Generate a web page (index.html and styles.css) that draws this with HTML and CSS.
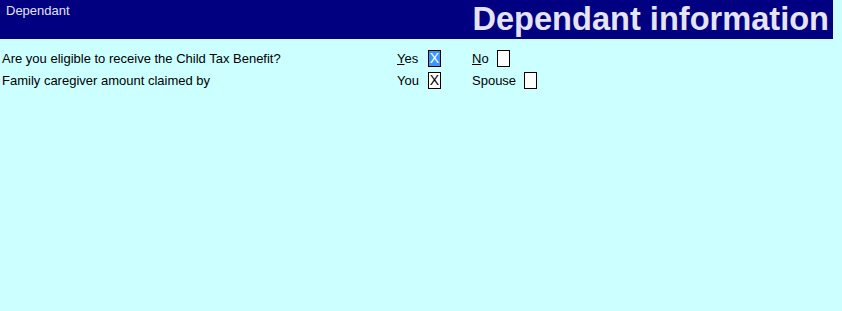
FILE: index.html
```html
<!DOCTYPE html>
<html lang="en">
<head>
  <meta charset="UTF-8">
  <title>Dependant</title>
  <link rel="stylesheet" href="styles.css">
</head>
<body>
  <div class="header">
    <span class="section">Dependant</span>
    <h1>Dependant information</h1>
  </div>

  <div class="form">
    <div class="question">Are you eligible to receive the Child Tax Benefit?</div>
    <div class="choice"><span class="lbl"><u>Y</u>es</span><span class="box selected">X</span></div>
    <div class="choice"><span class="lbl"><u>N</u>o</span><span class="box"></span></div>

    <div class="question">Family caregiver amount claimed by</div>
    <div class="choice"><span class="lbl">You</span><span class="box">X</span></div>
    <div class="choice"><span class="lbl">Spouse</span><span class="box"></span></div>
  </div>
</body>
</html>
```

FILE: styles.css
```css
body {
  margin: 0;
  background: #ccffff;
  font-family: "Liberation Sans", Arial, sans-serif;
  font-size: 13px;
  color: #000;
}
.header {
  width: 833px;
  height: 39px;
  background: #000080;
  color: #e4e4f4;
  display: flex;
  justify-content: space-between;
  align-items: flex-start;
  box-sizing: border-box;
  padding: 0 4px 0 6px;
}
.section {
  font-size: 13px;
  line-height: 15px;
  margin-top: 3px;
}
h1 {
  margin: 0;
  font-size: 32.6px;
  font-weight: bold;
  line-height: 42px;
  margin-top: -2px;
}
.form {
  display: grid;
  grid-template-columns: 395px 75px auto;
  row-gap: 5px;
  margin-top: 11px;
  padding-left: 2px;
}
.question, .choice {
  height: 17px;
  display: flex;
  align-items: center;
}
.lbl {
  display: inline-block;
  width: 31px;
}
.choice:nth-child(3) .lbl {
  width: 25px;
}
.choice:nth-child(6) .lbl {
  width: 52px;
}
.box {
  display: inline-block;
  width: 11px;
  height: 15px;
  border: 1px solid #000;
  background: #fff;
  text-align: center;
  line-height: 15px;
  font-size: 14px;
}
.box.selected {
  background: #3399ff;
  color: #fff;
}
```
